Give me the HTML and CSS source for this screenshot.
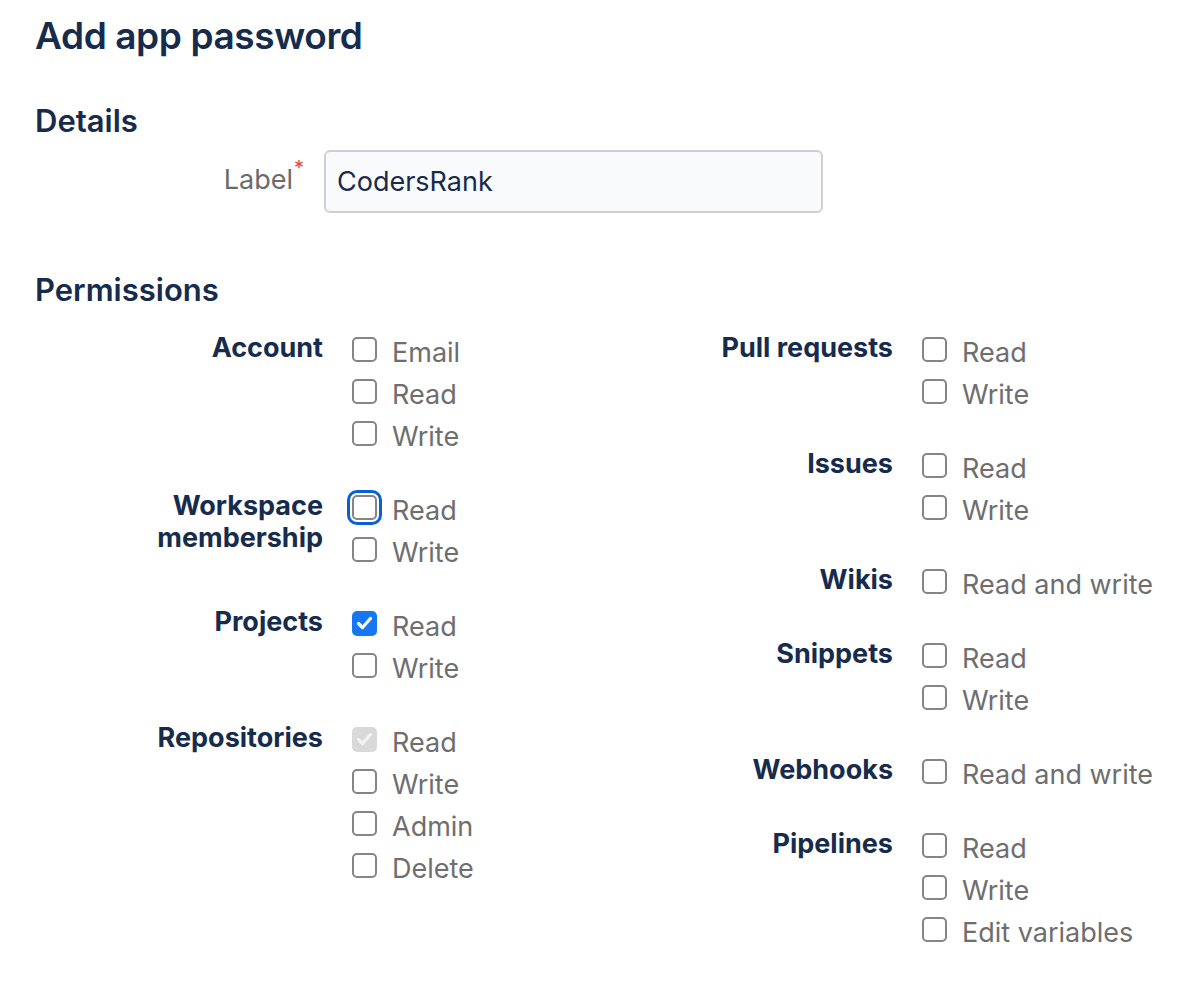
FILE: index.html
```html
<!DOCTYPE html>
<html lang="en">
<head>
<meta charset="utf-8">
<title>Add app password</title>
<link rel="stylesheet" href="styles.css">
</head>
<body>
<main class="page">
  <h1 class="title">Add app password</h1>

  <h2 class="section">Details</h2>
  <div class="field">
    <label class="field-label" for="label">Label<span class="req">*</span></label>
    <input class="text-input" id="label" type="text" value="CodersRank">
  </div>

  <h2 class="section section-perms">Permissions</h2>
  <div class="perm-grid">
    <div class="perm-col">
      <div class="group">
        <div class="group-label">Account</div>
        <div class="options">
          <label class="opt"><span class="box"></span><span class="opt-text">Email</span></label>
          <label class="opt"><span class="box"></span><span class="opt-text">Read</span></label>
          <label class="opt"><span class="box"></span><span class="opt-text">Write</span></label>
        </div>
      </div>
      <div class="group">
        <div class="group-label">Workspace<br>membership</div>
        <div class="options">
          <label class="opt"><span class="box focus"></span><span class="opt-text">Read</span></label>
          <label class="opt"><span class="box"></span><span class="opt-text">Write</span></label>
        </div>
      </div>
      <div class="group">
        <div class="group-label">Projects</div>
        <div class="options">
          <label class="opt"><span class="box checked"><svg viewBox="0 0 25 25" class="tick"><path d="M6.5 12.5 L10.5 16.5 L18.5 7.5"/></svg></span><span class="opt-text">Read</span></label>
          <label class="opt"><span class="box"></span><span class="opt-text">Write</span></label>
        </div>
      </div>
      <div class="group">
        <div class="group-label">Repositories</div>
        <div class="options">
          <label class="opt"><span class="box disabled"><svg viewBox="0 0 25 25" class="tick"><path d="M6.5 12.5 L10.5 16.5 L18.5 7.5"/></svg></span><span class="opt-text">Read</span></label>
          <label class="opt"><span class="box"></span><span class="opt-text">Write</span></label>
          <label class="opt"><span class="box"></span><span class="opt-text">Admin</span></label>
          <label class="opt"><span class="box"></span><span class="opt-text">Delete</span></label>
        </div>
      </div>
    </div>

    <div class="perm-col">
      <div class="group">
        <div class="group-label">Pull requests</div>
        <div class="options">
          <label class="opt"><span class="box"></span><span class="opt-text">Read</span></label>
          <label class="opt"><span class="box"></span><span class="opt-text">Write</span></label>
        </div>
      </div>
      <div class="group">
        <div class="group-label">Issues</div>
        <div class="options">
          <label class="opt"><span class="box"></span><span class="opt-text">Read</span></label>
          <label class="opt"><span class="box"></span><span class="opt-text">Write</span></label>
        </div>
      </div>
      <div class="group">
        <div class="group-label">Wikis</div>
        <div class="options">
          <label class="opt"><span class="box"></span><span class="opt-text">Read and write</span></label>
        </div>
      </div>
      <div class="group">
        <div class="group-label">Snippets</div>
        <div class="options">
          <label class="opt"><span class="box"></span><span class="opt-text">Read</span></label>
          <label class="opt"><span class="box"></span><span class="opt-text">Write</span></label>
        </div>
      </div>
      <div class="group">
        <div class="group-label">Webhooks</div>
        <div class="options">
          <label class="opt"><span class="box"></span><span class="opt-text">Read and write</span></label>
        </div>
      </div>
      <div class="group">
        <div class="group-label">Pipelines</div>
        <div class="options">
          <label class="opt"><span class="box"></span><span class="opt-text">Read</span></label>
          <label class="opt"><span class="box"></span><span class="opt-text">Write</span></label>
          <label class="opt"><span class="box"></span><span class="opt-text">Edit variables</span></label>
        </div>
      </div>
    </div>
  </div>
</main>
</body>
</html>
```

FILE: styles.css
```css
* { box-sizing: border-box; }

html, body {
  margin: 0;
  padding: 0;
  background: #ffffff;
}

body {
  font-family: Inter, "Noto Sans", "Liberation Sans", sans-serif;
  color: #172b4d;
}

.page {
  padding: 14px 0 0 35px;
}

.title {
  margin: 0;
  font-size: 37px;
  line-height: 44px;
  font-weight: 600;
  letter-spacing: -0.4px;
  color: #172b4d;
}

.section {
  margin: 44px 0 0;
  font-size: 31px;
  line-height: 38px;
  font-weight: 600;
  color: #172b4d;
}

.section-perms {
  margin-top: 58px;
}

.field {
  display: grid;
  grid-template-columns: 269px 499px;
  column-gap: 20px;
  margin-top: 10px;
  align-items: start;
}

.field-label {
  margin-top: 14px;
  text-align: right;
  font-size: 27px;
  line-height: 32px;
  color: #6b6b6b;
}

.req {
  display: inline-block;
  vertical-align: top;
  margin-top: -6px;
  margin-left: 1px;
  font-size: 20px;
  line-height: 20px;
  color: #e2483d;
}

.text-input {
  width: 499px;
  height: 63px;
  padding: 0 11px;
  border: 2px solid #ccd0d6;
  border-radius: 6px;
  background: #f9fafc;
  font-family: inherit;
  font-size: 27px;
  color: #172b4d;
  outline: none;
}

.perm-grid {
  display: grid;
  grid-template-columns: 570px 570px;
  margin-top: 23px;
}

.perm-col {
  display: flex;
  flex-direction: column;
  gap: 32px;
}

.group {
  display: grid;
  grid-template-columns: 288px 1fr;
  column-gap: 29px;
  align-items: start;
}

.group-label {
  text-align: right;
  font-size: 27px;
  line-height: 32px;
  font-weight: 700;
  color: #172b4d;
}

.options {
  display: flex;
  flex-direction: column;
}

.opt {
  display: flex;
  align-items: flex-start;
  gap: 15px;
  height: 42px;
}

.box {
  flex: none;
  width: 25px;
  height: 25px;
  margin-top: 5px;
  border: 2px solid #858585;
  border-radius: 5px;
  background: #ffffff;
  display: flex;
  align-items: center;
  justify-content: center;
}

.box.focus {
  outline: 3px solid #0a5fd6;
  outline-offset: 2px;
}

.box.checked {
  background: #1677f2;
  border-color: #1677f2;
}

.box.disabled {
  background: #d9d9d9;
  border-color: #d9d9d9;
}

.tick {
  width: 25px;
  height: 25px;
  flex: none;
  margin: -2px;
}

.tick path {
  fill: none;
  stroke: #ffffff;
  stroke-width: 3.2;
  stroke-linecap: round;
  stroke-linejoin: round;
}

.box.disabled .tick path {
  stroke: #f2f2f2;
}

.opt-text {
  font-size: 27px;
  line-height: 42px;
  color: #6e6e6e;
}
```
